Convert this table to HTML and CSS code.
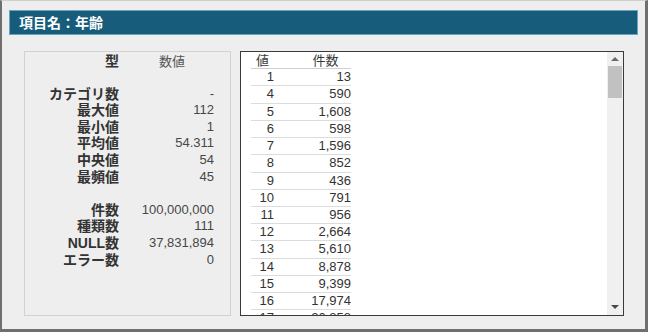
FILE: index.html
```html
<!DOCTYPE html>
<html lang="ja">
<head>
<meta charset="utf-8">
<title>項目名：年齢</title>
<link rel="stylesheet" href="styles.css">
</head>
<body>
<div class="frame">
  <div class="titlebar">項目名：年齢</div>
  <div class="panels">
    <div class="stats">
      <div class="lbl head">型</div><div class="val vhead">数値</div>
      <div class="spacer"></div>
      <div class="lbl">カテゴリ数</div><div class="val">-</div>
      <div class="lbl">最大値</div><div class="val">112</div>
      <div class="lbl">最小値</div><div class="val">1</div>
      <div class="lbl">平均値</div><div class="val">54.311</div>
      <div class="lbl">中央値</div><div class="val">54</div>
      <div class="lbl">最頻値</div><div class="val">45</div>
      <div class="spacer"></div>
      <div class="lbl">件数</div><div class="val">100,000,000</div>
      <div class="lbl">種類数</div><div class="val">111</div>
      <div class="lbl">NULL数</div><div class="val">37,831,894</div>
      <div class="lbl">エラー数</div><div class="val">0</div>
    </div>
    <div class="listbox">
      <div class="listarea">
        <div class="freq">
          <div class="fhead c1">値</div><div class="fhead c2">件数</div>
          <div class="cell c1">1</div><div class="cell c2">13</div>
          <div class="cell c1">4</div><div class="cell c2">590</div>
          <div class="cell c1">5</div><div class="cell c2">1,608</div>
          <div class="cell c1">6</div><div class="cell c2">598</div>
          <div class="cell c1">7</div><div class="cell c2">1,596</div>
          <div class="cell c1">8</div><div class="cell c2">852</div>
          <div class="cell c1">9</div><div class="cell c2">436</div>
          <div class="cell c1">10</div><div class="cell c2">791</div>
          <div class="cell c1">11</div><div class="cell c2">956</div>
          <div class="cell c1">12</div><div class="cell c2">2,664</div>
          <div class="cell c1">13</div><div class="cell c2">5,610</div>
          <div class="cell c1">14</div><div class="cell c2">8,878</div>
          <div class="cell c1">15</div><div class="cell c2">9,399</div>
          <div class="cell c1">16</div><div class="cell c2">17,974</div>
          <div class="cell c1">17</div><div class="cell c2">20,858</div>
        </div>
      </div>
      <div class="scrollbar">
        <div class="arrow up"></div>
        <div class="track"><div class="thumb"></div></div>
        <div class="arrow down"></div>
      </div>
    </div>
  </div>
</div>
</body>
</html>
```
FILE: styles.css
```css
html, body {
  margin: 0;
  padding: 0;
  background: #eeeeee;
}
body {
  width: 648px;
  height: 332px;
  overflow: hidden;
  font-family: "Liberation Sans", "Noto Sans CJK JP", sans-serif;
}
.frame {
  box-sizing: border-box;
  width: 648px;
  height: 332px;
  background: #eeeeee;
  border-top: 1px solid #cfcfcf;
  border-left: 2px solid #6f6f6f;
  border-right: 3px solid #6f6f6f;
  border-bottom: 3px solid #6f6f6f;
  padding: 9px 7px 0 7px;
  display: flex;
  flex-direction: column;
}
.titlebar {
  box-sizing: border-box;
  height: 25px;
  background: #175d7b;
  border: 1px solid #6aa3be;
  color: #ffffff;
  font-family: "Noto Sans CJK JP", sans-serif;
  font-size: 14px;
  font-weight: bold;
  line-height: 22px;
  padding-left: 9px;
}
.panels {
  flex: 1;
  display: flex;
  gap: 9px;
  margin: 16px 14px 13px 15px;
  min-height: 0;
}
.stats {
  box-sizing: border-box;
  width: 207px;
  border: 1px solid #d2d2d2;
  display: grid;
  grid-template-columns: 94px 84px;
  column-gap: 11px;
  grid-auto-rows: 16.6px;
  align-content: start;
  padding-top: 0.5px;
}
.spacer {
  grid-column: 1 / 3;
}
.lbl {
  text-align: right;
  font-family: "Liberation Sans", "Noto Sans CJK JP", sans-serif;
  font-size: 14px;
  font-weight: bold;
  color: #333333;
  line-height: 16.6px;
  white-space: nowrap;
}
.val {
  text-align: right;
  font-size: 13px;
  color: #474747;
  line-height: 16.6px;
  white-space: nowrap;
}
.vhead {
  text-align: center;
  font-family: "Noto Sans CJK JP", sans-serif;
  color: #555555;
}
.listbox {
  flex: 1;
  box-sizing: border-box;
  background: #ffffff;
  border: 1px solid #3a3a3a;
  display: flex;
  overflow: hidden;
}
.listarea {
  flex: 1;
  overflow: hidden;
  padding-left: 10px;
}
.freq {
  display: grid;
  grid-template-columns: 39px 61px;
  grid-auto-rows: 17.23px;
  font-size: 13px;
  color: #333333;
}
.fhead {
  box-sizing: border-box;
  font-family: "Noto Sans CJK JP", sans-serif;
  border-bottom: 1px solid #cfcfcf;
  line-height: 17px;
  color: #3a3a3a;
  margin-top: -1px;
}
.fhead.c1 {
  text-align: left;
  padding-left: 5px;
}
.fhead.c2 {
  text-align: center;
  padding-left: 10px;
}
.cell {
  box-sizing: border-box;
  border-bottom: 1px solid #dcdcdc;
  line-height: 16.5px;
  text-align: right;
  white-space: nowrap;
}
.cell.c1 {
  padding-right: 16px;
}
.scrollbar {
  width: 16px;
  background: #f0f0f0;
  display: flex;
  flex-direction: column;
  align-items: center;
}
.arrow {
  height: 14px;
  display: flex;
  align-items: center;
  justify-content: center;
  width: 16px;
}
.arrow.up::before {
  content: "";
  border-left: 4px solid transparent;
  border-right: 4px solid transparent;
  border-bottom: 4px solid #6a6a6a;
}
.arrow.down::before {
  content: "";
  border-left: 4px solid transparent;
  border-right: 4px solid transparent;
  border-top: 4px solid #4a4a4a;
}
.track {
  flex: 1;
  width: 16px;
  display: flex;
  justify-content: center;
}
.thumb {
  width: 14px;
  height: 32px;
  background: #c1c1c1;
}
.arrow.down {
  height: 16px;
}
```
